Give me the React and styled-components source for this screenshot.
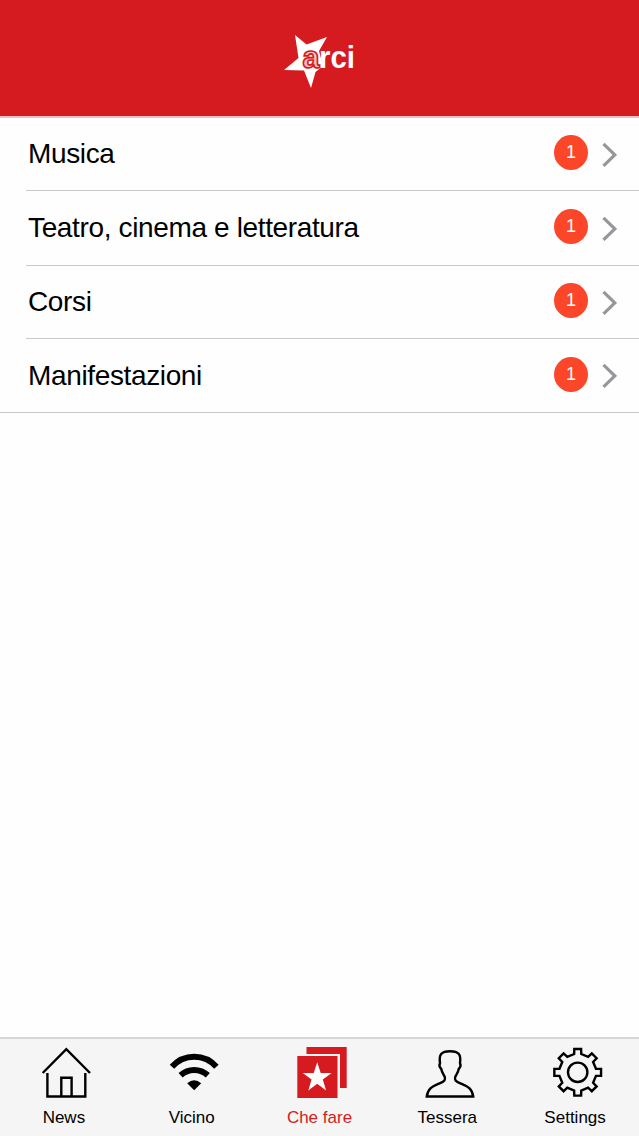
import React from 'react';
import styled, { createGlobalStyle } from 'styled-components';

const GlobalStyle = createGlobalStyle`
  * { box-sizing: border-box; }
  body { margin: 0; background: #fefefe; font-family: "Liberation Sans", Arial, sans-serif; color: #000; }
`;

const Screen = styled.div`
  display: flex;
  flex-direction: column;
  width: 100%;
  height: 100vh;
`;

const Header = styled.header`
  display: flex;
  justify-content: center;
  align-items: flex-start;
  flex: none;
  height: 118px;
  padding: 32px 0 0 4px;
  background: #d51b20;
  border-bottom: 2px solid #f3c4c6;
`;

const List = styled.ul`
  flex: 1;
  margin: 0;
  padding: 0;
  list-style: none;
`;

const Row = styled.li`
  display: flex;
  height: ${(p) => p.$height}px;
  padding-left: ${(p) => (p.$last ? 0 : 26)}px;
`;

const RowBody = styled.div`
  display: flex;
  flex: 1;
  align-items: center;
  padding: 0 22px 0 ${(p) => (p.$last ? 28 : 2)}px;
  border-bottom: 1px solid #c9c9c9;
`;

const RowTitle = styled.span`
  flex: 1;
  font-size: 28px;
  letter-spacing: -0.36px;
  line-height: 32px;
  white-space: nowrap;
`;

const Badge = styled.span`
  width: 34px;
  height: 35px;
  margin: 0 14px 3px 0;
  border-radius: 50%;
  background: #fc4629;
  color: #fff;
  font-size: 18px;
  line-height: 34px;
  text-align: center;
`;

const TabBar = styled.nav`
  display: flex;
  flex: none;
  height: 99px;
  background: #f5f5f5;
  border-top: 2px solid #d6d6d6;
`;

const Tab = styled.a`
  display: flex;
  flex: 1;
  flex-direction: column;
  align-items: center;
  padding-top: 8px;
  color: ${(p) => (p.$active ? '#d51b20' : '#000')};
  svg { display: block; margin-left: 5px; }
`;

const TabLabel = styled.span`
  margin-top: 9px;
  font-size: 17px;
  line-height: 20px;
`;

const Logo = () => (
  <svg width="80" height="60" viewBox="0 0 80 60">
    <path d="M13 3 L24.5 12.5 L45 5 L37 19 L41 34 L33.5 40 L29 56 L22 38.5 L2 38 L16.5 26Z" fill="#fff" />
    <g fontFamily="Liberation Sans" fontWeight="700" fontSize="32">
      <text x="20.5" y="36" textLength="17" lengthAdjust="spacingAndGlyphs" fill="#f6bcbd" stroke="#d51b20" strokeWidth="1.7">a</text>
      <text x="37" y="36" textLength="36" lengthAdjust="spacingAndGlyphs" fill="#fff">rci</text>
    </g>
  </svg>
);

const Chevron = () => (
  <svg width="15" height="25" viewBox="0 0 15 25" fill="none" stroke="#96969b" strokeWidth="3.2">
    <path d="M1.5 1.8 L12.8 12.8 L1.5 23.8" />
  </svg>
);

const Icon = ({ children }) => (
  <svg width="50" height="52" viewBox="0 0 50 52" fill="none" stroke="currentColor" strokeWidth="2.4">
    {children}
  </svg>
);

const House = () => (
  <Icon>
    <path d="M1.7 26 L25.3 2.2 L49 26 M6.4 26 V49.5 H44.3 V26 M20.3 49.5 V30.8 H30.6 V49.5" />
  </Icon>
);

const Signal = () => (
  <Icon>
    <g strokeWidth="6">
      <path d="M3 19.7 A29.5 29.5 0 0 1 47.4 19.7" />
      <path d="M11.6 28.3 A20 20 0 0 1 38.8 28.3" />
    </g>
    <path d="M18.2 36.3 Q25.2 30 32.2 36.3 L25.2 43.3Z" fill="currentColor" stroke="none" />
  </Icon>
);

const Cards = () => (
  <Icon>
    <g fill="currentColor" stroke="none">
      <path d="M9.5 0 H49.7 V41 H43 V7 H9.5Z" />
      <path d="M0.3 9 H40.5 V51 H0.3Z" />
    </g>
    <path d="M20.2 15.3 L23.7 26 H34.7 L25.8 32.6 L29.1 43.4 L20.2 36.8 L11.3 43.4 L14.6 32.6 L5.7 26 H16.7Z" fill="#fff" stroke="none" />
  </Icon>
);

const Person = () => (
  <Icon>
    <path d="M1.8 49.5 C3 40.5 9 39 14 36.7 C20 34 20.5 33 19.8 30 C18.5 27.5 17 26 16.2 21.8 C14.3 20 14 18 15 16 C13.8 8 16 4.2 25 4.2 C34 4.2 36.2 8 35 16 C36 18 35.7 20 33.8 21.8 C33 26 31.5 27.5 30.2 30 C29.5 33 30 34 36 36.7 C41 39 47 40.5 48.2 49.5Z" />
  </Icon>
);

const polar = (radius, degrees) => {
  const a = (degrees * Math.PI) / 180;
  return `${(24.7 + radius * Math.sin(a)).toFixed(2)} ${(25.3 - radius * Math.cos(a)).toFixed(2)}`;
};

const gearOutline = `M${Array.from({ length: 8 }, (_, i) => i * 45)
  .map((a) => [polar(18.6, a - 11), polar(23.6, a - 8.3), polar(23.6, a + 8.3), polar(18.6, a + 11)].join(' L'))
  .join(' L')}Z`;

const Gear = () => (
  <Icon>
    <path d={gearOutline} />
    <circle cx="24.7" cy="25.3" r="9.7" />
  </Icon>
);

const rows = [
  { title: 'Musica', count: 1, height: 73 },
  { title: 'Teatro, cinema e letteratura', count: 1, height: 75 },
  { title: 'Corsi', count: 1, height: 73 },
  { title: 'Manifestazioni', count: 1, height: 74 },
];

const tabs = [
  { label: 'News', Glyph: House },
  { label: 'Vicino', Glyph: Signal },
  { label: 'Che fare', Glyph: Cards, active: true },
  { label: 'Tessera', Glyph: Person },
  { label: 'Settings', Glyph: Gear },
];

export default function App() {
  return (
    <Screen>
      <GlobalStyle />
      <Header><Logo /></Header>
      <List>
        {rows.map(({ title, count, height }, i) => (
          <Row key={title} $height={height} $last={i === rows.length - 1}>
            <RowBody $last={i === rows.length - 1}>
              <RowTitle>{title}</RowTitle>
              <Badge>{count}</Badge>
              <Chevron />
            </RowBody>
          </Row>
        ))}
      </List>
      <TabBar>
        {tabs.map(({ label, Glyph, active }) => (
          <Tab key={label} $active={active}>
            <Glyph />
            <TabLabel>{label}</TabLabel>
          </Tab>
        ))}
      </TabBar>
    </Screen>
  );
}
